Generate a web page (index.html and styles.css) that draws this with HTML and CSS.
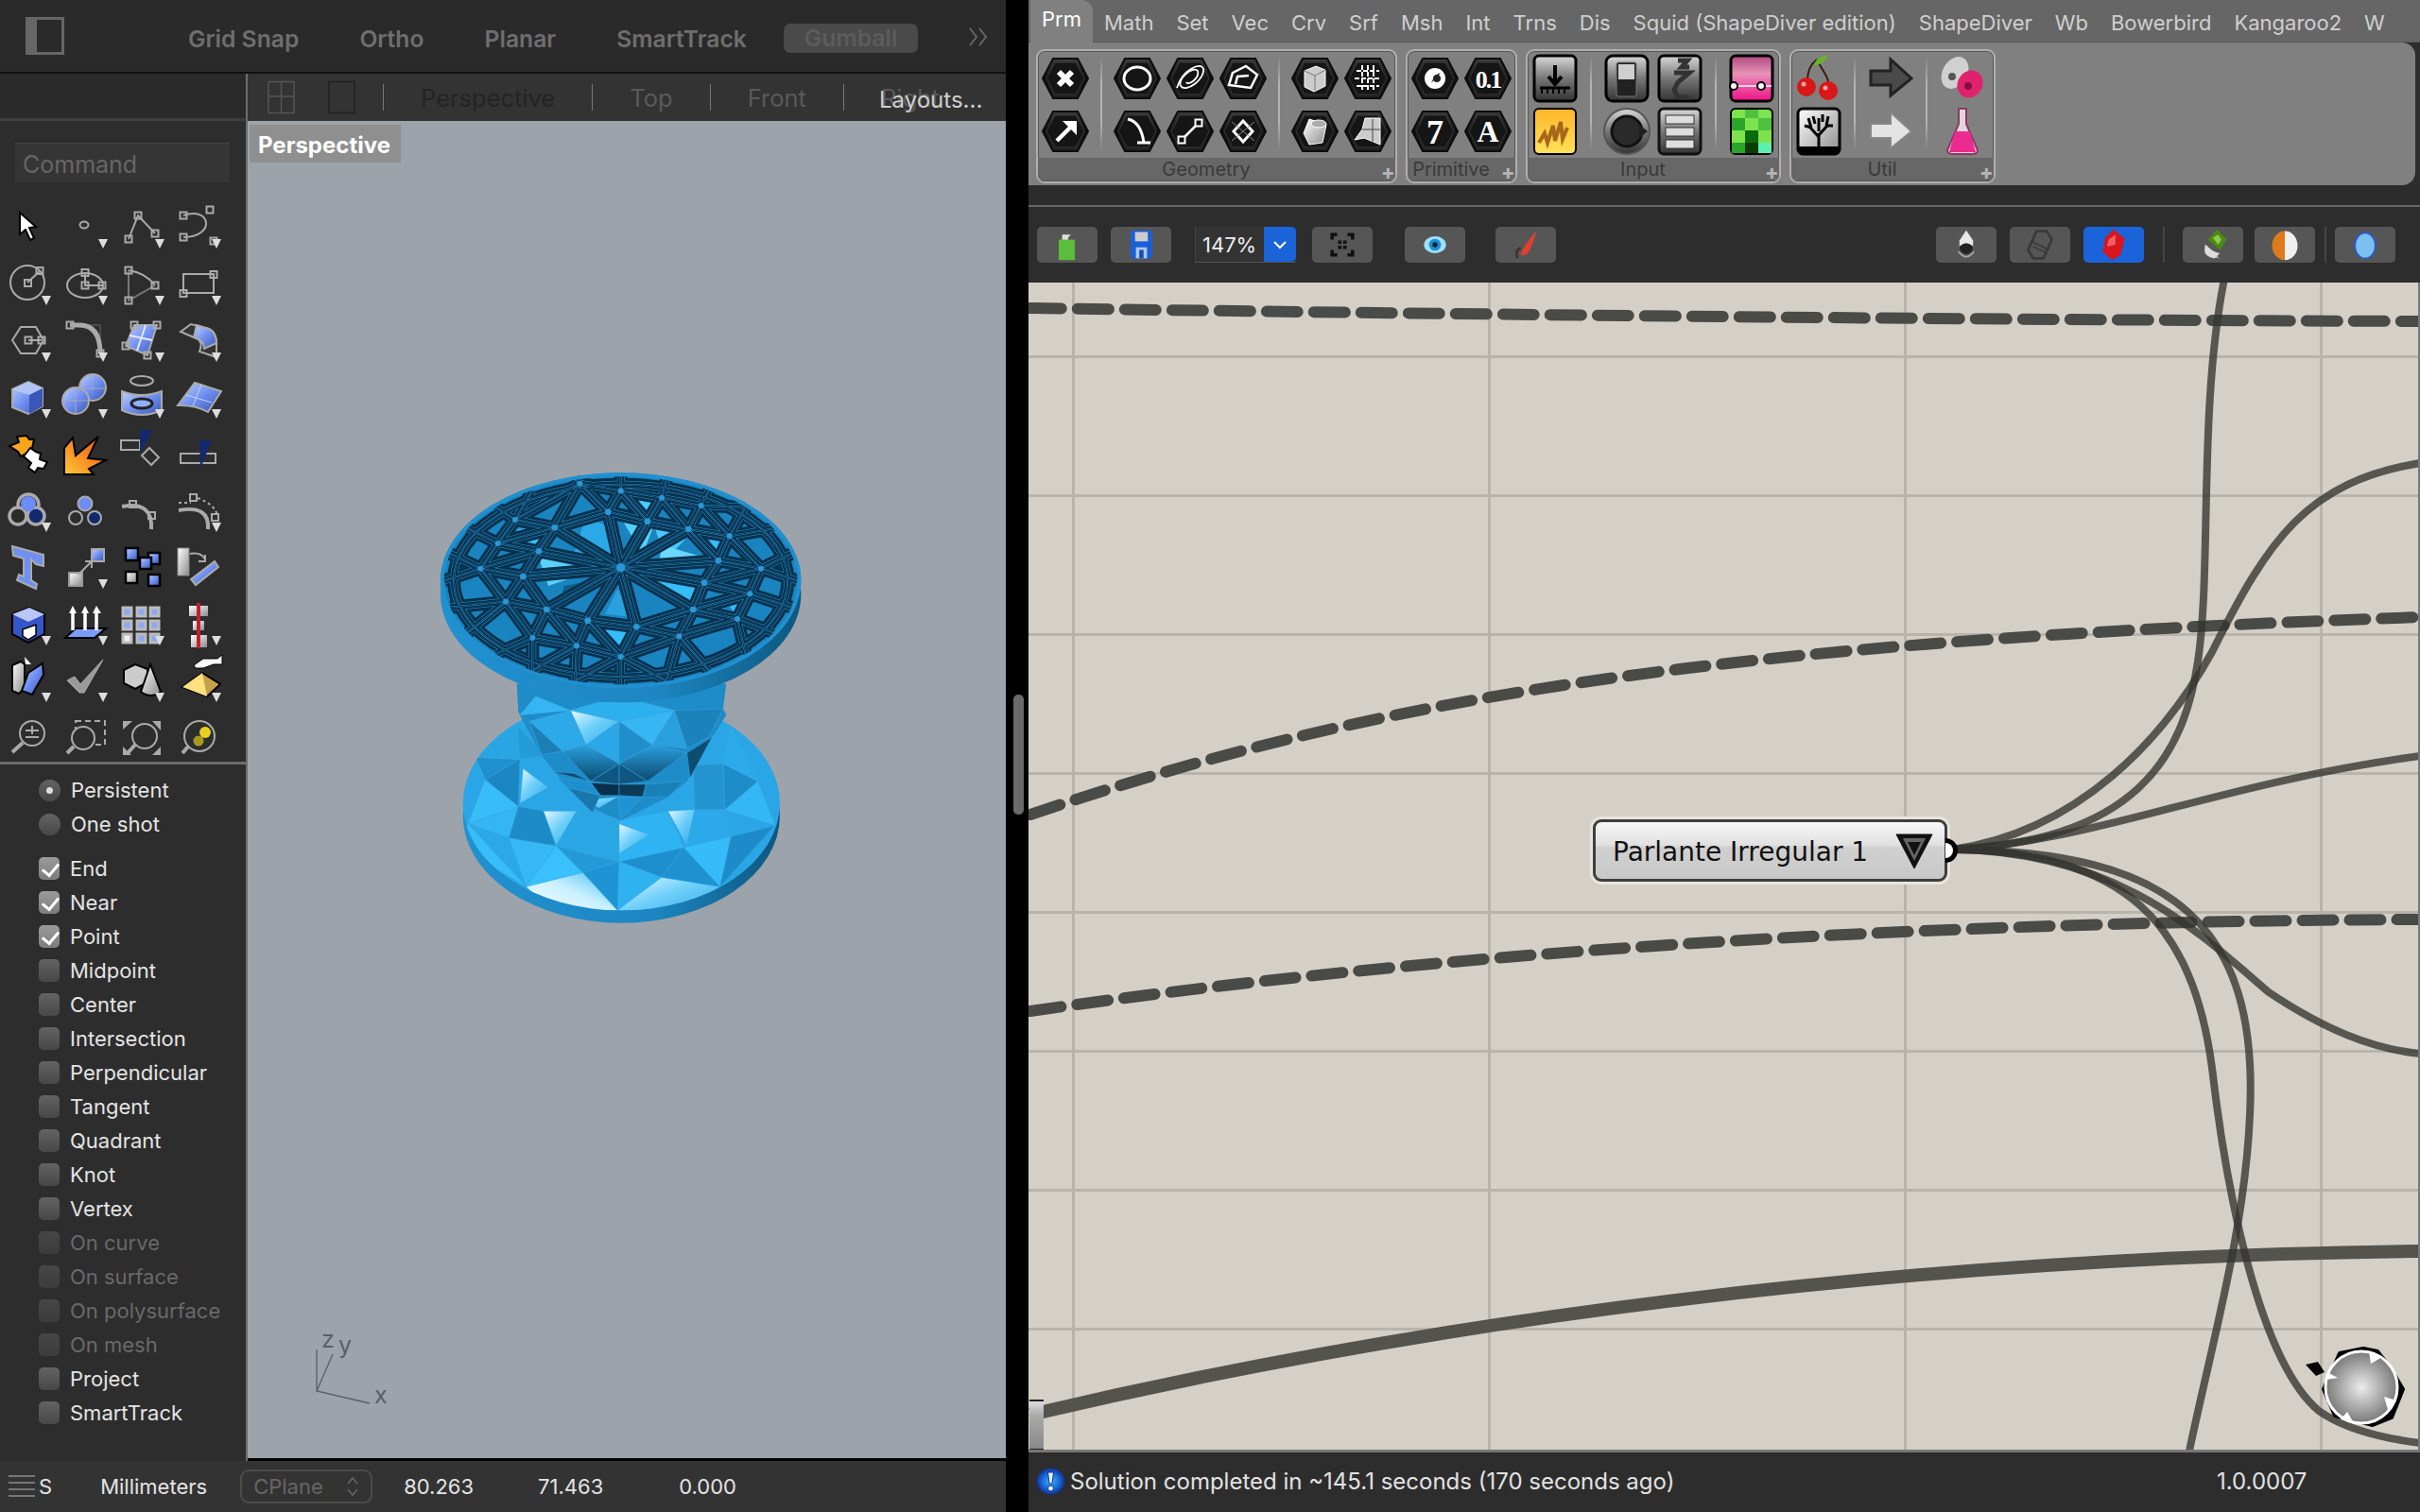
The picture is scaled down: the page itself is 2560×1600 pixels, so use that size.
FILE: index.html
```html
<!DOCTYPE html>
<html lang="en">
<head>
<meta charset="utf-8">
<title>Rhino and Grasshopper</title>
<link rel="stylesheet" href="styles.css">
</head>
<body>
<svg class="defs" aria-hidden="true">
  <defs>
    <linearGradient id="bl" x1="0" y1="0" x2="1" y2="1"><stop offset="0" stop-color="#c4d0fa"/><stop offset=".5" stop-color="#6f90f2"/><stop offset="1" stop-color="#3a55b0"/></linearGradient>
    <linearGradient id="gr" x1="0" y1="0" x2="1" y2="1"><stop offset="0" stop-color="#fff"/><stop offset="1" stop-color="#8c8c8c"/></linearGradient>
    <linearGradient id="org" x1="0" y1="1" x2="1" y2="0"><stop offset="0" stop-color="#ffc838"/><stop offset="1" stop-color="#f04a10"/></linearGradient>
    <linearGradient id="hexg" x1="0" y1="0" x2="0" y2="1"><stop offset="0" stop-color="#3c3c3c"/><stop offset=".5" stop-color="#111"/><stop offset="1" stop-color="#222"/></linearGradient>
    <linearGradient id="sq" x1="0" y1="0" x2="0" y2="1"><stop offset="0" stop-color="#d8d8d8"/><stop offset=".5" stop-color="#777"/><stop offset="1" stop-color="#333"/></linearGradient>
    <linearGradient id="pk" x1="0" y1="0" x2="0" y2="1"><stop offset="0" stop-color="#b04a80"/><stop offset=".4" stop-color="#e892b8"/><stop offset="1" stop-color="#ee1088"/></linearGradient>
    <linearGradient id="yl" x1="0" y1="0" x2="0" y2="1"><stop offset="0" stop-color="#fdb62a"/><stop offset="1" stop-color="#ffe25a"/></linearGradient>
    <linearGradient id="whb" x1="0" y1="1" x2="1" y2="0"><stop offset="0" stop-color="#fff"/><stop offset=".55" stop-color="#c8f0ff"/><stop offset="1" stop-color="#3ab8f5"/></linearGradient>
    <linearGradient id="whc" x1="0" y1="0" x2="1" y2="1"><stop offset="0" stop-color="#e8f9ff"/><stop offset=".45" stop-color="#70d0fa"/><stop offset="1" stop-color="#2aa8ea"/></linearGradient>
    <linearGradient id="rim" x1="0" y1="0" x2="1" y2="0"><stop offset="0" stop-color="#2191d0"/><stop offset=".6" stop-color="#1d86c2"/><stop offset="1" stop-color="#0d577f"/></linearGradient>
    <linearGradient id="arcd" x1="0" y1="0" x2="0" y2="1"><stop offset="0" stop-color="#2a9fde"/><stop offset="1" stop-color="#0c4a6e"/></linearGradient>
    <radialGradient id="giz"><stop offset="0" stop-color="#ececec"/><stop offset="1" stop-color="#7a7a7a"/></radialGradient>
    <radialGradient id="inf"><stop offset="0" stop-color="#3cb8f0"/><stop offset=".6" stop-color="#1a6ad8"/><stop offset="1" stop-color="#12308c"/></radialGradient>
    <g id="tri"><path d="M44 43h10l-5 10z" fill="#ddd"/></g>
    <g id="hex"><path d="M4 28 15 7h26l11 21-11 21H15z" fill="url(#hexg)" stroke="#0c0c0c" stroke-width="2"/><path d="M8 28 17 11h22l9 17-9 17H17z" fill="#151515" stroke="#3a3a3a" stroke-width="1"/></g>
  </defs>
</svg>

<div class="app">
  <section class="rhino">
    <header class="topbar">
      <svg class="panel-icon" viewBox="0 0 41 40"><rect x="1.500" y="1.500" width="38" height="37" fill="none" stroke="#666" stroke-width="3"/><rect x="3" y="3" width="9" height="34" fill="#666"/></svg>
      <nav class="toggles">
        <span>Grid Snap</span><span>Ortho</span><span>Planar</span><span>SmartTrack</span><span class="pill">Gumball</span>
      </nav>
      <svg class="more" viewBox="0 0 22 24"><path d="M2 3l7 9-7 9M12 3l7 9-7 9" fill="none" stroke="#666" stroke-width="2"/></svg>
    </header>
    <div class="rhino-mid">
      <aside class="side">
        <div class="side-head"></div>
        <div class="cmd">Command</div>
        <div class="tools">
          <svg viewBox="0 0 60 60"><path d="M21 15V38L27 33 32 44l4-2-5-11 7-1z" fill="#fff" stroke="#000" stroke-width="2"/></svg>
          <svg viewBox="0 0 60 60" class="tl"><ellipse cx="29" cy="28" rx="4.500" ry="3.500"/><use href="#tri"/></svg>
          <svg viewBox="0 0 60 60" class="tl"><path d="M16 43 26 18 44 37"/><rect x="12.500" y="39.500" width="7" height="7"/><rect x="22.500" y="14.500" width="7" height="7"/><rect x="40.500" y="33.500" width="7" height="7"/><use href="#tri"/></svg>
          <svg viewBox="0 0 60 60" class="tl"><path d="M14 18C44 8 48 41 14 41"/><rect x="10.500" y="14.500" width="7" height="7"/><rect x="38.500" y="8.500" width="7" height="7"/><rect x="10.500" y="37.500" width="7" height="7"/><rect x="42.500" y="41.500" width="7" height="7"/><use href="#tri"/></svg>

          <svg viewBox="0 0 60 60" class="tl"><circle cx="29" cy="29" r="18"/><path d="M29 29 42 17"/><rect x="26" y="26" width="7" height="7"/><rect x="38.500" y="13" width="7" height="7"/><use href="#tri"/></svg>
          <svg viewBox="0 0 60 60" class="tl"><ellipse cx="30" cy="32" rx="19" ry="13"/><path d="M30 19V32H48"/><rect x="26.500" y="15" width="7" height="7"/><rect x="26.500" y="28.500" width="7" height="7"/><rect x="44.500" y="28.500" width="7" height="7"/><use href="#tri"/></svg>
          <svg viewBox="0 0 60 60" class="tl"><path d="M16 16C30 18 38 24 44 32" /><path d="M16 16V48L44 32" stroke="#777"/><rect x="12.500" y="12.500" width="7" height="7"/><rect x="40.500" y="28.500" width="7" height="7"/><rect x="12.500" y="44.500" width="7" height="7"/><use href="#tri"/></svg>
          <svg viewBox="0 0 60 60" class="tl"><rect x="14" y="20" width="32" height="20"/><rect x="10.500" y="37" width="7" height="7"/><rect x="42.500" y="17" width="7" height="7"/><use href="#tri"/></svg>

          <svg viewBox="0 0 60 60" class="tl"><path d="M13 30 22 16H38L46 30 38 44H22Z"/><path d="M30 30H44"/><rect x="26.500" y="26.500" width="7" height="7"/><rect x="40.500" y="26.500" width="7" height="7"/><use href="#tri"/></svg>
          <svg viewBox="0 0 60 60" class="tl"><path d="M14 14H46V44" stroke="#666" stroke-width="1"/><path d="M14 14H24Q46 14 46 44" stroke-width="5"/><rect x="10.500" y="10.500" width="7" height="7"/><rect x="42.500" y="40.500" width="7" height="7"/><use href="#tri"/></svg>
          <svg viewBox="0 0 60 60" class="tl"><path d="M22 14 46 14 36 46 13 36Z" fill="url(#bl)"/><path d="M34 14 25 41M17 25 41 30" stroke="#e0e8ff"/><rect x="18.500" y="10.500" width="7" height="7"/><rect x="42.500" y="10.500" width="7" height="7"/><rect x="9.500" y="32.500" width="7" height="7"/><rect x="32.500" y="42.500" width="7" height="7"/><use href="#tri"/></svg>
          <svg viewBox="0 0 60 60" class="tl"><path d="M11 21 22 13 41 18Q50 22 49 38V48L31 42Q36 30 25 27Z" fill="#333"/><path d="M25 27Q36 30 36 39L49 33Q49 22 41 18L28 14Z" fill="url(#bl)"/><use href="#tri"/></svg>

          <svg viewBox="0 0 60 60"><path d="M13 22 30 14 45 21V40L30 48 13 41Z" fill="url(#bl)" stroke="#aaa" stroke-width="2"/><path d="M13 22 31 28 45 21 30 14Z" fill="#b4c4f8"/><path d="M31 28 45 21V40L31 48Z" fill="#3a56b8"/><use href="#tri"/></svg>
          <svg viewBox="0 0 60 60"><circle cx="38" cy="20" r="14" fill="url(#bl)" stroke="#aaa" stroke-width="2"/><circle cx="20" cy="34" r="14" fill="url(#bl)" stroke="#aaa" stroke-width="2"/><path d="M8 34H33M20 20V48M25 21H52M38 7V24" stroke="#a8a8b8" fill="none"/><use href="#tri"/></svg>
          <svg viewBox="0 0 60 60"><ellipse cx="30" cy="13" rx="12" ry="5" fill="none" stroke="#aaa" stroke-width="2"/><path d="M9 24Q30 32 51 24V44Q30 54 9 44Z" fill="url(#bl)" stroke="#aaa" stroke-width="2"/><ellipse cx="30" cy="37" rx="11" ry="5" fill="#8fb0ff" stroke="#222" stroke-width="3"/><use href="#tri"/></svg>
          <svg viewBox="0 0 60 60"><path d="M8 39 26 15 54 24 40 46Q26 38 8 39Z" fill="url(#bl)" stroke="#aaa" stroke-width="2"/><path d="M17 28 44 36M33 17 24 40" stroke="#c8d6ff" fill="none"/><use href="#tri"/></svg>

          <svg viewBox="0 0 60 60"><path d="M10 22 20 18 18 12 28 11 31 15 36 15 34 24 28 30 22 33 19 28Z" fill="#f8a51a" stroke="#000" stroke-width="2"/><path d="M25 33 32 24 38 28 43 30 42 36 50 39 46 46 40 45 37 50 30 45 33 40Z" fill="#fff" stroke="#000" stroke-width="2"/></svg>
          <svg viewBox="0 0 60 60"><path d="M8 52V24L17 13 20 32 44 12 33 35 52 37 34 46 39 52Z" fill="url(#org)" stroke="#000" stroke-width="2"/></svg>
          <svg viewBox="0 0 60 60"><path d="M8 16H28V26H8Z M30 32 38 24 48 34 40 42Z" fill="none" stroke="#aaa" stroke-width="2"/><path d="M28 5H42L28 29Z" fill="#13296f"/></svg>
          <svg viewBox="0 0 60 60"><path d="M11 30H48V40H11Z" fill="none" stroke="#aaa" stroke-width="2"/><path d="M31 16H44L32 46Z" fill="#13296f"/></svg>

          <svg viewBox="0 0 60 60"><circle cx="30" cy="24" r="11" fill="none" stroke="#aaa" stroke-width="3.500"/><circle cx="19" cy="36" r="9" fill="#2b2b2b" stroke="#aaa" stroke-width="3.500"/><circle cx="38" cy="36" r="9" fill="#13296f" stroke="#aaa" stroke-width="3.500"/><circle cx="30" cy="23" r="8" fill="#6c8cf6"/><use href="#tri"/></svg>
          <svg viewBox="0 0 60 60"><circle cx="30" cy="23" r="7.500" fill="#6c8cf6" stroke="#aaa" stroke-width="2"/><circle cx="20" cy="38" r="7" fill="none" stroke="#aaa" stroke-width="2"/><circle cx="40" cy="38" r="7" fill="#13296f" stroke="#aaa" stroke-width="2"/></svg>
          <svg viewBox="0 0 60 60" class="tl"><path d="M9 26Q42 20 40 50" stroke-width="4"/><rect x="17" y="20" width="7" height="7"/><rect x="37" y="32" width="7" height="7"/></svg>
          <svg viewBox="0 0 60 60" class="tl"><path d="M9 22H22M29 17Q48 24 50 36" stroke-dasharray="3 3"/><path d="M9 30Q42 24 40 50" stroke-width="4"/><rect x="21" y="13" width="7" height="7"/><rect x="44" y="34" width="7" height="7"/><use href="#tri"/></svg>

          <svg viewBox="0 0 60 60"><path d="M13 8 46 17V29L38 27 33 22 33 44 39 48 38 53 18 44 20 38 25 40V21L14 18Z" fill="#6f90f2" stroke="#aaa" stroke-width="2"/></svg>
          <svg viewBox="0 0 60 60"><rect x="13" y="36" width="14" height="14" fill="url(#gr)" stroke="#999" stroke-width="2"/><rect x="37" y="11" width="13" height="13" fill="url(#bl)" stroke="#aaa" stroke-width="2"/><path d="M23 38 37 24M30 24H37V31" stroke="#aaa" stroke-width="2" fill="none"/><use href="#tri"/></svg>
          <svg viewBox="0 0 60 60"><rect x="13" y="10" width="13" height="13" fill="url(#bl)" stroke="#000" stroke-width="2.500"/><rect x="37" y="15" width="12" height="12" fill="url(#bl)" stroke="#000" stroke-width="2.500"/><rect x="28" y="20" width="12" height="12" fill="url(#bl)" stroke="#000" stroke-width="2.500"/><rect x="13" y="35" width="12" height="12" fill="url(#gr)" stroke="#000" stroke-width="2.500"/><rect x="37" y="38" width="12" height="12" fill="url(#bl)" stroke="#000" stroke-width="2.500"/></svg>
          <svg viewBox="0 0 60 60"><rect x="8" y="10" width="12" height="29" fill="url(#gr)" stroke="#888" stroke-width="1"/><path d="M21 16Q33 14 37 22" fill="none" stroke="#aaa" stroke-width="2"/><path d="M30 24 37 24 37 17" fill="none" stroke="#aaa" stroke-width="2"/><path d="M22 43 47 24 51 30 27 49Z" fill="url(#bl)" stroke="#aaa" stroke-width="2"/></svg>

          <svg viewBox="0 0 60 60"><path d="M13 20 31 13 47 20V41L30 50 13 41Z" fill="#3556c8" stroke="#000" stroke-width="2"/><path d="M13 20 31 13 47 20 30 28Z" fill="#b8c6fa"/><path d="M24 36 38 31V42L30 47 24 43Z" fill="#fff" stroke="#000" stroke-width="1.500"/><use href="#tri"/></svg>
          <svg viewBox="0 0 60 60"><path d="M9 45 20 35H52L40 45Z" fill="#7a9cf8" stroke="#000" stroke-width="2"/><path d="M17 37V18M30 37V18M42 37V18" stroke="#fff" stroke-width="3.500"/><path d="M13 19 17 11 21 19ZM26 19 30 11 34 19ZM38 19 42 11 47 19Z" fill="#fff"/><use href="#tri"/></svg>
          <svg viewBox="0 0 60 60" class="grid3"><rect x="10" y="13" width="9" height="9"/><rect x="25" y="13" width="9" height="9"/><rect x="39" y="13" width="9" height="9"/><rect x="10" y="27" width="9" height="9"/><rect x="25" y="27" width="9" height="9"/><rect x="39" y="27" width="9" height="9"/><rect class="w" x="10" y="41" width="9" height="9"/><rect x="25" y="41" width="9" height="9"/><rect x="39" y="41" width="9" height="9"/><use href="#tri"/></svg>
          <svg viewBox="0 0 60 60"><rect x="20" y="11" width="20" height="11" fill="url(#gr)"/><rect x="24" y="27" width="12" height="10" fill="url(#gr)"/><rect x="22" y="42" width="17" height="13" fill="url(#gr)"/><rect x="28" y="8" width="4" height="48" fill="#c02030"/><use href="#tri"/></svg>

          <svg viewBox="0 0 60 60"><path d="M13 14 22 10 26 13V38L20 44 13 41Z" fill="url(#gr)" stroke="#000" stroke-width="2"/><path d="M26 5 33 13 27 13Z" fill="#fff"/><path d="M30 22 45 12 46 24 34 45 23 41Z" fill="url(#bl)" stroke="#000" stroke-width="2"/><use href="#tri"/></svg>
          <svg viewBox="0 0 60 60"><path d="M11 30 19 26 25 34 49 8 29 43H24Z" fill="#9a9a9a" stroke="#aaa"/><use href="#tri"/></svg>
          <svg viewBox="0 0 60 60"><path d="M11 19 23 13 36 18V32L23 39 11 33Z" fill="#ccc" stroke="#000" stroke-width="2"/><path d="M29 42 39 13 50 42Q40 50 29 42Z" fill="url(#gr)" stroke="#000" stroke-width="2"/><use href="#tri"/></svg>
          <svg viewBox="0 0 60 60"><path d="M34 22 53 34 39 47 13 37Z" fill="#c4a04a" stroke="#000" stroke-width="2"/><path d="M34 22 13 37 39 47Z" fill="#fde080"/><path d="M25 14 35 7H50L55 3V13H46L35 17H27Z" fill="#fff" stroke="#000"/><use href="#tri"/></svg>

          <svg viewBox="0 0 60 60" class="tl mag"><circle cx="34" cy="21" r="13"/><path d="M24 31 13 41" stroke-width="4"/><path d="M27 25H41M34 13V22M27 18H41" stroke-width="2"/></svg>
          <svg viewBox="0 0 60 60" class="tl mag"><rect x="20" y="8" width="31" height="25" stroke-dasharray="6 4"/><circle cx="28" cy="26" r="12" fill="#2d2d2d"/><path d="M18 35 11 42" stroke-width="4"/></svg>
          <svg viewBox="0 0 60 60" class="tl mag"><circle cx="33" cy="24" r="13"/><path d="M23 33 15 42" stroke-width="4"/><path d="M10 8H20L10 17ZM50 8V18L41 8ZM10 35V44H19ZM50 35V44H41Z" fill="#aaa" stroke="none"/></svg>
          <svg viewBox="0 0 60 60" class="tl mag"><circle cx="31" cy="24" r="16"/><circle cx="37" cy="20" r="6" fill="#e8d020" stroke="none"/><circle cx="30" cy="29" r="5.500" fill="#a89820" stroke="none"/><path d="M19 35 13 42" stroke-width="4"/></svg>
        </div>
        <div class="opts">
          <label class="opt radio on"><i></i>Persistent</label>
          <label class="opt radio gapb"><i></i>One shot</label>
          <label class="opt chk on"><i></i>End</label>
          <label class="opt chk on"><i></i>Near</label>
          <label class="opt chk on"><i></i>Point</label>
          <label class="opt chk"><i></i>Midpoint</label>
          <label class="opt chk"><i></i>Center</label>
          <label class="opt chk"><i></i>Intersection</label>
          <label class="opt chk"><i></i>Perpendicular</label>
          <label class="opt chk"><i></i>Tangent</label>
          <label class="opt chk"><i></i>Quadrant</label>
          <label class="opt chk"><i></i>Knot</label>
          <label class="opt chk"><i></i>Vertex</label>
          <label class="opt chk off"><i></i>On curve</label>
          <label class="opt chk off"><i></i>On surface</label>
          <label class="opt chk off"><i></i>On polysurface</label>
          <label class="opt chk off"><i></i>On mesh</label>
          <label class="opt chk"><i></i>Project</label>
          <label class="opt chk"><i></i>SmartTrack</label>
        </div>
      </aside>
      <div class="vp-col">
        <div class="vp-tabs">
          <svg class="vp-ico" viewBox="0 0 30 36"><path d="M1 1H29V35H1ZM1 17H29M15 1V35" fill="#333" stroke="#555" stroke-width="1.500"/></svg>
          <svg class="vp-ico second" viewBox="0 0 30 36"><path d="M1 1H29V35H1Z" fill="#333" stroke="#222" stroke-width="1.500"/></svg>
          <b class="vsep"></b><span class="vt cur">Perspective</span>
          <b class="vsep"></b><span class="vt">Top</span>
          <b class="vsep"></b><span class="vt">Front</span>
          <b class="vsep"></b><span class="vt">Right</span>
          <span class="layouts">Layouts...</span>
        </div>
        <div class="viewport">
          <div class="vp-label">Perspective</div>
          <svg class="model" viewBox="0 0 1320 1560">
            <defs>
              <clipPath id="lowface"><ellipse cx="652" cy="1110" rx="503" ry="340"/></clipPath>
              <clipPath id="topface"><ellipse cx="650" cy="403" rx="572" ry="342"/></clipPath>
              <g id="rib" fill="none">
                <path d="M650 362 610 185M650 362 735 215M650 362 865 240M650 362 960 340M650 362 915 410M650 362 880 495M650 362 700 550M650 362 545 530M650 362 415 495M650 362 340 390M650 362 390 310M650 362 440 235M610 185 735 215 865 240 960 340 915 410 880 495 700 550 545 530 415 495 340 390 390 310 440 235 610 185M610 185 520 95M610 185 650 118M735 215 650 118M735 215 780 140M865 240 780 140M865 240 905 165M865 240 995 262M960 340 995 262M960 340 1095 365M915 410 1095 365M915 410 1060 445M880 495 1060 445M880 495 1020 525M880 495 835 580M700 550 835 580M700 550 650 645M545 530 650 645M545 530 510 610M415 495 510 610M415 495 370 585M415 495 285 470M340 390 285 470M340 390 205 365M390 310 205 365M390 310 260 285M440 235 260 285M440 235 315 210M440 235 520 95M520 95 650 118 780 140 905 165 995 262 1095 365 1060 445 1020 525 835 580 650 645 510 610 370 585 285 470 205 365 260 285 315 210 520 95"/>
                <path d="M1095 365 1210 403M1095 365 1191 318M1060 445 1191 488M1020 525 1135 568M1020 525 1046 636M835 580 930 689M835 580 795 722M650 645 650 733M650 645 795 722M650 645 505 722M510 610 505 722M510 610 370 689M370 585 370 689M370 585 254 636M285 470 165 568M285 470 109 488M205 365 90 403M205 365 109 318M260 285 165 238M315 210 254 170M315 210 370 117M520 95 505 84M650 118 650 73M780 140 795 84M905 165 930 117M905 165 1046 170M995 262 1135 238M995 262 1046 170"/>
                <ellipse cx="650" cy="403" rx="530" ry="305"/>
              </g>
            </defs>
            <!-- lower disc -->
            <ellipse cx="652" cy="1150" rx="503" ry="340" fill="url(#rim)"/>
            <ellipse cx="652" cy="1110" rx="503" ry="340" fill="#2aa6e6"/>
            <g clip-path="url(#lowface)" class="fc">
              <path d="M165 1175 295 1220 325 1120Z" fill="#33b6f3"/>
              <path d="M165 1175 220 1035 325 1120Z" fill="#38bdf8"/>
              <path d="M190 965 330 970 220 1035Z" fill="#1f90ce"/>
              <path d="M220 1035 330 970 325 1120Z" fill="#1a86c2"/>
              <path d="M190 965 320 860 330 970Z" fill="#2aa5e4"/>
              <path d="M320 860 410 960 330 970Z" fill="#259bd9"/>
              <path d="M165 1175 350 1375 295 1220Z" fill="#2ba8e8"/>
              <path d="M140 1250 165 1175 350 1375Z" fill="#38bdf8"/>
              <path d="M295 1220 445 1245 350 1375Z" fill="#36b8f5"/>
              <path d="M445 1245 530 1330 350 1375Z" fill="#3ac0fa"/>
              <path d="M445 1245 645 1295 530 1330Z" fill="#2399d8"/>
              <path d="M350 1375 530 1330 640 1450 450 1470Z" fill="url(#whb)"/>
              <path d="M530 1330 645 1295 640 1450Z" fill="#1f94d4"/>
              <path d="M645 1295 780 1345 640 1450Z" fill="#2fb2f0"/>
              <path d="M640 1450 780 1345 965 1375 800 1470Z" fill="url(#whc)"/>
              <path d="M645 1295 850 1250 780 1345Z" fill="#1e8fce"/>
              <path d="M850 1250 965 1375 780 1345Z" fill="#1f90d0"/>
              <path d="M850 1250 1000 1215 965 1375Z" fill="#35bbf8"/>
              <path d="M1000 1215 1140 1180 965 1375Z" fill="#1d8bc9"/>
              <path d="M295 1220 325 1120 405 1135 445 1245Z" fill="#1c8bc8"/>
              <path d="M405 1135 510 1135 445 1245Z" fill="url(#whc)"/>
              <path d="M445 1245 510 1135 645 1165 645 1295Z" fill="#2aa6e5"/>
              <path d="M645 1165 800 1135 850 1250 645 1295Z" fill="#2fb4f3"/>
              <path d="M645 1175 740 1210 645 1270Z" fill="url(#whc)"/>
              <path d="M800 1135 885 1130 860 1245Z" fill="url(#whc)"/>
              <path d="M885 1130 980 1130 1000 1215 860 1245Z" fill="#2ca9ea"/>
              <path d="M980 1130 1140 1180 1000 1215Z" fill="#2ba5e6"/>
              <path d="M980 1130 1085 1040 1140 1180Z" fill="#34b8f5"/>
              <path d="M975 985 1085 1040 980 1130Z" fill="#1e8cc8"/>
              <path d="M975 985 1000 860 1085 1040Z" fill="#2cabeb"/>
              <path d="M880 990 975 985 980 1130 885 1130Z" fill="#2494d0"/>
              <path d="M340 1000 420 1060 330 1110Z" fill="url(#whc)"/>
            </g>
            <!-- waist -->
            <path d="M320 730H985L975 810 985 830 940 900 900 960 860 1040 800 1090 720 1130 650 1165 570 1130 480 1060 400 960 340 850 325 820Z" fill="#1e8cc8"/>
            <g class="fc">
              <path d="M380 770 490 815 330 830Z" fill="#33b6f3"/>
              <path d="M490 815 645 770 820 815 645 850Z" fill="#2db0ee"/>
              <path d="M490 815 645 850 540 925Z" fill="url(#whc)"/>
              <path d="M645 850 540 925 645 985Z" fill="#2ba6e6"/>
              <path d="M645 850 750 925 645 985Z" fill="#1f8ecb"/>
              <path d="M645 850 820 815 750 925Z" fill="#36b6f2"/>
              <path d="M490 815 360 850 465 945 540 925Z" fill="#2ea9e8"/>
              <path d="M820 815 975 810 930 900 860 935Z" fill="#1c82bb"/>
              <path d="M820 815 750 925 860 935Z" fill="#2a9fde"/>
              <path d="M465 945 540 925 645 985 555 1040Z" fill="url(#arcd)"/>
              <path d="M645 985 750 925 860 950 735 1040Z" fill="url(#arcd)"/>
              <path d="M860 950 940 900 870 1030Z" fill="#0d4d72"/>
              <path d="M360 850 465 945 400 955Z" fill="#1b7eb5"/>
              <path d="M645 985 555 1040 645 1050Z" fill="#0f5680"/>
              <path d="M645 985 735 1040 645 1050Z" fill="#0f5680"/>
              <path d="M430 1010 555 1040 500 1015Z" fill="#0c4a6e"/>
              <path d="M555 1045 645 1050 645 1085 585 1085Z" fill="#08304a"/>
              <path d="M645 1050 730 1050 720 1090 645 1085Z" fill="#0a3a57"/>
              <path d="M450 1030 555 1045 585 1085 480 1060Z" fill="#1e8fce"/>
              <path d="M730 1050 850 1040 800 1090 720 1090Z" fill="#1a80b8"/>
              <path d="M540 1100 640 1090 580 1125Z" fill="url(#whc)"/>
              <path d="M640 1090 720 1090 650 1160Z" fill="#1f94d4"/>
              <path d="M480 1060 585 1085 560 1140Z" fill="#1877ab"/>
            </g>
            <!-- top disc -->
            <ellipse cx="650" cy="448" rx="572" ry="342" fill="url(#rim)"/>
            <ellipse cx="650" cy="403" rx="572" ry="342" fill="#1a84c0"/>
            <g clip-path="url(#topface)">
              <path d="M540 200 650 250 640 340 500 320Z" fill="#2ba8e8"/>
              <path d="M660 220 760 215 720 320Z" fill="#55d0fc"/>
              <path d="M760 240 880 245 790 340Z" fill="#45c8fb"/>
              <path d="M780 290 950 340 770 360Z" fill="#6cd8fd"/>
              <path d="M390 330 620 350 420 420Z" fill="#5ad0fc"/>
              <path d="M470 420 630 390 450 500Z" fill="#0e5e8c"/>
              <path d="M640 430 700 520 600 510Z" fill="#2aa0de"/>
              <path d="M700 380 920 400 860 490Z" fill="#35bdf8"/>
              <path d="M540 130 720 150 620 190Z" fill="#1a84c0"/>
              <path d="M680 100 790 140 730 190Z" fill="#4ccafb"/>
              <path d="M320 240 430 230 380 310Z" fill="#35bdf8"/>
              <path d="M950 420 1080 420 1020 520Z" fill="#35bdf8"/>
              <path d="M590 560 700 560 645 640Z" fill="#35bdf8"/>
              <path d="M930 270 1010 260 960 340Z" fill="#35bdf8"/>
              <use href="#rib" stroke="#08324e" stroke-width="42"/>
              <use href="#rib" stroke="#2a97d6" stroke-width="23"/>
              <use href="#rib" stroke="#08324e" stroke-width="20"/>
              <use href="#rib" stroke="#2a97d6" stroke-width="5.500"/>
              <use href="#rib" stroke="#08324e" stroke-width="3"/>
              <g fill="#2a97d6"><circle cx="650" cy="362" r="14"/><circle cx="610" cy="185" r="10"/><circle cx="735" cy="215" r="10"/><circle cx="865" cy="240" r="10"/><circle cx="960" cy="340" r="10"/><circle cx="915" cy="410" r="10"/><circle cx="880" cy="495" r="10"/><circle cx="700" cy="550" r="10"/><circle cx="545" cy="530" r="10"/><circle cx="415" cy="495" r="10"/><circle cx="340" cy="390" r="10"/><circle cx="390" cy="310" r="10"/><circle cx="440" cy="235" r="10"/><circle cx="520" cy="95" r="9"/><circle cx="650" cy="118" r="9"/><circle cx="780" cy="140" r="9"/><circle cx="905" cy="165" r="9"/><circle cx="995" cy="262" r="9"/><circle cx="1095" cy="365" r="9"/><circle cx="1060" cy="445" r="9"/><circle cx="1020" cy="525" r="9"/><circle cx="835" cy="580" r="9"/><circle cx="650" cy="645" r="9"/><circle cx="510" cy="610" r="9"/><circle cx="370" cy="585" r="9"/><circle cx="285" cy="470" r="9"/><circle cx="205" cy="365" r="9"/><circle cx="260" cy="285" r="9"/><circle cx="315" cy="210" r="9"/></g>
              <ellipse cx="650" cy="403" rx="568" ry="338" fill="none" stroke="#2190d0" stroke-width="14"/>
            </g>
          </svg>
          <svg class="axes" viewBox="0 0 100 80"><path d="M13 10V54L69 67M13 54 30 15" fill="none" stroke="#5a5f66" stroke-width="1.300"/></svg>
          <span class="ax ax-z">z</span><span class="ax ax-y">y</span><span class="ax ax-x">x</span>
        </div>
      </div>
    </div>
    <footer class="r-status">
      <svg class="burger" viewBox="0 0 28 26"><path d="M0 2H28M0 9H28M0 16H28M0 23H28" stroke="#777" stroke-width="2"/></svg>
      <span class="s-s">S</span>
      <span class="s-unit">Millimeters</span>
      <span class="s-plane">CPlane<svg viewBox="0 0 14 22"><path d="M2 8 7 2l5 6M2 14l5 6 5-6" fill="none" stroke="#666" stroke-width="1.500"/></svg></span>
      <span class="s-x">80.263</span><span class="s-y">71.463</span><span class="s-z">0.000</span>
    </footer>
  </section>

  <div class="split"><i></i></div>

  <section class="gh">
    <nav class="gh-tabs">
      <span class="gt cur">Prm</span><span class="gt">Math</span><span class="gt">Set</span><span class="gt">Vec</span><span class="gt">Crv</span><span class="gt">Srf</span><span class="gt">Msh</span><span class="gt">Int</span><span class="gt">Trns</span><span class="gt">Dis</span><span class="gt">Squid (ShapeDiver edition)</span><span class="gt">ShapeDiver</span><span class="gt">Wb</span><span class="gt">Bowerbird</span><span class="gt">Kangaroo2</span><span class="gt">W</span>
    </nav>
    <div class="ribbon">
      <div class="grp">
        <div class="cells">
          <div class="col">
            <svg viewBox="0 0 56 56"><use href="#hex"/><path d="M21 21 35 35M35 21 21 35" class="gw" stroke-width="6"/></svg>
            <svg viewBox="0 0 56 56"><use href="#hex"/><path d="M19 38 35 22" class="gw" stroke-width="4.500"/><path d="M25 17H40V32Z" fill="#fff"/></svg>
          </div>
          <b class="csep"></b>
          <div class="col">
            <svg viewBox="0 0 56 56"><use href="#hex"/><ellipse cx="28" cy="28" rx="14" ry="12" class="gw" stroke-width="3"/></svg>
            <svg viewBox="0 0 56 56"><use href="#hex"/><path d="M18 15Q32 18 35 40M28 40H42" class="gw" stroke-width="3"/></svg>
          </div>
          <div class="col">
            <svg viewBox="0 0 56 56"><use href="#hex"/><path d="M14 38C20 18 40 10 42 18 44 28 24 44 18 36 14 28 32 14 36 20 38 28 26 36 24 32" class="gw" stroke-width="1.800"/></svg>
            <svg viewBox="0 0 56 56"><use href="#hex"/><path d="M19 37 37 19" class="gw" stroke-width="2.500"/><rect x="15.500" y="33.500" width="7" height="7" fill="#111" stroke="#fff" stroke-width="2"/><rect x="33.500" y="15.500" width="7" height="7" fill="#111" stroke="#fff" stroke-width="2"/></svg>
          </div>
          <div class="col">
            <svg viewBox="0 0 56 56"><use href="#hex"/><path d="M17 22 31 15 43 24 36 38 13 35Z M20 34 22 26 34 25" class="gw" stroke-width="2.500"/></svg>
            <svg viewBox="0 0 56 56"><use href="#hex"/><path d="M28 17 38 28 28 39 18 28Z" class="gw" stroke-width="3"/><path d="M16 18 40 38M40 18 16 38" stroke="#888" stroke-width="1"/></svg>
          </div>
          <b class="csep"></b>
          <div class="col">
            <svg viewBox="0 0 56 56"><use href="#hex"/><path d="M17 20 29 15 39 19V36L27 42 17 37Z" fill="#ccc" stroke="#fff"/><path d="M17 20 28 25 39 19M28 25V41" stroke="#777" fill="none"/></svg>
            <svg viewBox="0 0 56 56"><use href="#hex"/><path d="M22 15 40 21 36 40 22 42 16 30Z" fill="url(#gr)" stroke="#fff"/><ellipse cx="32" cy="20" rx="8" ry="4" fill="#aaa" stroke="#fff"/></svg>
          </div>
          <div class="col">
            <svg viewBox="0 0 56 56"><use href="#hex"/><path d="M16 20H40M14 28H42M16 36H40M22 14V42M28 14V42M34 14V42" class="gw" stroke-width="2" stroke-dasharray="5 2"/></svg>
            <svg viewBox="0 0 56 56"><use href="#hex"/><path d="M25 14H41V42L24 35 14 37 22 26Z" fill="#ccc" stroke="#fff"/><path d="M33 15V40M22 26H41" stroke="#444"/></svg>
          </div>
        </div>
        <div class="gfoot"><span>Geometry</span><em>✚</em></div>
      </div>
      <div class="grp">
        <div class="cells">
          <div class="col">
            <svg viewBox="0 0 56 56"><use href="#hex"/><circle cx="28" cy="28" r="11" fill="#fff"/><path d="M24 33 34 22Q28 23 24 33Z" fill="#222"/><circle cx="30" cy="28" r="4" fill="#222"/></svg>
            <svg viewBox="0 0 56 56"><use href="#hex"/><text x="28" y="41" class="gsym big">7</text></svg>
          </div>
          <div class="col">
            <svg viewBox="0 0 56 56"><use href="#hex"/><text x="28" y="38" class="gsym mid">0.1</text></svg>
            <svg viewBox="0 0 56 56"><use href="#hex"/><text x="28" y="39" class="gsym big2">A</text></svg>
          </div>
        </div>
        <div class="gfoot"><span>Primitive</span><em>✚</em></div>
      </div>
      <div class="grp">
        <div class="cells">
          <div class="col">
            <svg viewBox="0 0 56 56"><rect x="6" y="4" width="44" height="48" rx="5" fill="url(#sq)" stroke="#000" stroke-width="3"/><path d="M28 14V32M21 26 28 34 35 26" stroke="#000" stroke-width="4" fill="none"/><path d="M12 38H44" stroke="#000" stroke-width="3"/><path d="M14 39V44M20 39V44M26 39V44M32 39V44M38 39V44" stroke="#000" stroke-width="2"/></svg>
            <svg viewBox="0 0 56 56"><rect x="6" y="4" width="44" height="48" rx="5" fill="url(#yl)" stroke="#000" stroke-width="2"/><path d="M11 40 17 30 20 40 26 22 28 38 34 18 36 36 41 24" fill="none" stroke="#a8661a" stroke-width="4"/></svg>
          </div>
          <b class="csep"></b>
          <div class="col">
            <svg viewBox="0 0 56 56"><rect x="6" y="4" width="44" height="48" rx="7" fill="url(#sq)" stroke="#000" stroke-width="3"/><rect x="17" y="11" width="21" height="36" rx="2" fill="#222" stroke="#777"/><rect x="19" y="13" width="17" height="16" fill="#cfcfcf"/></svg>
            <svg viewBox="0 0 56 56"><circle cx="28" cy="28" r="24" fill="url(#sq)" stroke="#555" stroke-width="2"/><circle cx="28" cy="28" r="16" fill="#2a2a2a" stroke="#111" stroke-width="3"/><path d="M40 20 50 28 40 36Z" fill="#222"/></svg>
          </div>
          <div class="col">
            <svg viewBox="0 0 56 56"><rect x="6" y="4" width="44" height="48" rx="5" fill="url(#sq)" stroke="#000" stroke-width="3"/><path d="M26 9H36L30 16H38M22 22H38L26 32 22 40 26 48H38" fill="none" stroke="#333" stroke-width="5"/></svg>
            <svg viewBox="0 0 56 56"><rect x="6" y="4" width="44" height="48" rx="5" fill="url(#sq)" stroke="#111" stroke-width="3"/><rect x="13" y="11" width="30" height="9" fill="#ddd" stroke="#333"/><rect x="13" y="24" width="30" height="9" fill="#ddd" stroke="#333"/><rect x="13" y="37" width="30" height="9" fill="#ddd" stroke="#333"/></svg>
          </div>
          <b class="csep"></b>
          <div class="col">
            <svg viewBox="0 0 56 56"><rect x="6" y="4" width="44" height="48" rx="5" fill="url(#pk)" stroke="#000" stroke-width="3"/><path d="M7 36H49" stroke="#fff" stroke-width="1.500"/><circle cx="9" cy="36" r="4" fill="#fff" stroke="#000" stroke-width="2"/><circle cx="38" cy="36" r="4" fill="#fff" stroke="#000" stroke-width="2"/></svg>
            <svg viewBox="0 0 56 56" class="check"><rect x="6" y="4" width="44" height="48" rx="5" fill="#7de24e" stroke="#000" stroke-width="2"/><path d="M7 14H21V27H7ZM21 27H35V40H21ZM7 40H21V51H7Z" fill="#2aa52a"/><path d="M21 5H35V14H21ZM35 14H49V27H35ZM35 40H49V51H35Z" fill="#50c040"/><path d="M21 27H35V40H21Z" fill="#0c6a0c"/><path d="M21 40H35V51H21Z" fill="#0e3c06"/><path d="M35 40H49V51H35Z" fill="#5af0b0"/></svg>
          </div>
        </div>
        <div class="gfoot"><span>Input</span><em>✚</em></div>
      </div>
      <div class="grp">
        <div class="cells">
          <div class="col">
            <svg viewBox="0 0 56 56"><path d="M26 8C18 14 16 22 16 30M26 8C32 20 38 26 38 32" fill="none" stroke="#3a1a14" stroke-width="2"/><path d="M22 15Q26 4 38 3 36 12 22 15Z" fill="#6ab02a"/><circle cx="15" cy="37" r="10" fill="#d81818"/><circle cx="38" cy="41" r="10" fill="#d81818"/><circle cx="12" cy="34" r="2.500" fill="#f6a0a0"/><circle cx="35" cy="38" r="2.500" fill="#f6a0a0"/></svg>
            <svg viewBox="0 0 56 56"><rect x="6" y="4" width="44" height="48" rx="5" fill="url(#gr)" stroke="#000" stroke-width="3"/><rect x="7" y="44" width="42" height="7" fill="#000"/><path d="M28 48V30M28 34 19 24M28 32 37 22M28 28V14M20 24 13 22M20 24 17 14M36 22 43 22M36 22 38 12M24 20 22 12M32 18 32 10" stroke="#000" stroke-width="3" fill="none"/></svg>
          </div>
          <b class="csep"></b>
          <div class="col">
            <svg viewBox="0 0 56 56"><path d="M7 20H28V8L50 28 28 46V35H7Z" fill="#4a4a4a" stroke="#222" stroke-width="3"/></svg>
            <svg viewBox="0 0 56 56"><path d="M7 20H28V8L50 28 28 46V35H7Z" fill="#e4e4e4" stroke="#888" stroke-width="2"/></svg>
          </div>
          <b class="csep"></b>
          <div class="col">
            <svg viewBox="0 0 56 56"><ellipse cx="20" cy="22" rx="13" ry="18" fill="#d0d0d0" transform="rotate(30 20 22)"/><circle cx="17" cy="26" r="4" fill="#555"/><ellipse cx="36" cy="34" rx="13" ry="15" fill="#e0226e" transform="rotate(30 36 34)"/><circle cx="34" cy="36" r="4" fill="#801040"/></svg>
            <svg viewBox="0 0 56 56"><path d="M24 4H32V20L44 48Q44 52 38 52H18Q12 52 12 48L24 20Z" fill="#e4d4dc" stroke="#8a3a60" stroke-width="2"/><path d="M20 28H36L42 50H14Z" fill="#ec2a90"/></svg>
          </div>
        </div>
        <div class="gfoot"><span>Util</span><em>✚</em></div>
      </div>
    </div>
    <div class="band"></div>
    <div class="gh-tools">
      <button class="tb"><svg viewBox="0 0 40 40"><path d="M14 8H24L21 12V34H14Z" fill="#ddd"/><rect x="10" y="14" width="19" height="24" fill="#5cbc3c"/></svg></button>
      <button class="tb"><svg viewBox="0 0 40 40"><rect x="8" y="3" width="25" height="33" rx="2" fill="#1a5fd8"/><rect x="13" y="5" width="15" height="11" fill="#ccc"/><rect x="14" y="23" width="13" height="13" fill="#aac8f8"/><rect x="18" y="26" width="5" height="10" fill="#1a4ab0"/></svg></button>
      <div class="zoomsel"><span>147%</span><i><svg viewBox="0 0 16 10"><path d="M2 2l6 6 6-6" fill="none" stroke="#fff" stroke-width="2"/></svg></i></div>
      <button class="tb wide1"><svg viewBox="0 0 40 40"><path d="M6 6H14V10H10V14H6ZM26 6H34V14H30V10H26ZM6 26H10V30H14V34H6ZM34 26V34H26V30H30V26Z" fill="#111"/><path d="M15 15h4v4h-4zM21 21h4v4h-4zM21 15h4v4h-4zM15 21h4v4h-4z" fill="#111"/></svg></button>
      <button class="tb wide2"><svg viewBox="0 0 40 40"><ellipse cx="20" cy="20" rx="13" ry="10" fill="#9fe0ff"/><circle cx="20" cy="20" r="7" fill="#1a8fd0"/><circle cx="20" cy="20" r="3" fill="#123"/></svg></button>
      <button class="tb"><svg viewBox="0 0 40 40"><path d="M33 4C28 10 17 20 14 32 18 34 24 30 26 24Z" fill="#e04030"/><path d="M14 24Q7 26 10 36" stroke="#432" stroke-width="3" fill="none"/></svg></button>
      <span class="grow"></span>
      <button class="tb"><svg viewBox="0 0 40 40"><path d="M20 3 28 15V24H12V15Z" fill="#e8e8e8"/><path d="M12 22Q20 14 28 22 28 30 20 31 12 30 12 22Z" fill="#222"/><path d="M11 28Q20 40 29 28" fill="none" stroke="#aaa" stroke-width="2"/></svg></button>
      <button class="tb"><svg viewBox="0 0 40 40"><path d="M16 4H28L34 14 24 36H12L6 26Z" fill="none" stroke="#3a3a3a" stroke-width="3"/><path d="M10 16 30 26M12 22 28 30" stroke="#3a3a3a" stroke-width="2"/></svg></button>
      <button class="tb blue"><svg viewBox="0 0 40 40"><path d="M20 2 33 13 28 32 18 38 7 28 10 12Z" fill="#d8161c"/><path d="M14 14 22 8 22 20 12 22Z" fill="#f06060"/></svg></button>
      <b class="tsep"></b>
      <button class="tb near"><svg viewBox="0 0 40 40"><path d="M10 20 20 28 27 36 12 30Z" fill="#e4e4e4"/><path d="M10 26Q10 34 22 36L28 30Q18 28 12 20Z" fill="#ddd"/><path d="M14 14 25 2 36 14 28 26Z" fill="#4a8a14"/><path d="M20 12 26 8 30 14 26 20Z" fill="#90c850"/></svg></button>
      <button class="tb short"><svg viewBox="0 0 40 40"><path d="M20 4A15 17 0 0 0 20 38Z" fill="#dd7a1c"/><path d="M20 4A15 17 0 0 1 20 38Z" fill="#f0f0f0"/></svg></button>
      <b class="tsep two"></b>
      <button class="tb last"><svg viewBox="0 0 40 40"><ellipse cx="20" cy="21" rx="12" ry="15" fill="#7cc0f0" stroke="#2a5ad0" stroke-width="2"/></svg></button>
    </div>
    <div class="canvas">
      <svg class="wires" viewBox="1088 299 1472 1238">
        <g fill="none">
          <g stroke="#4a4a46" stroke-width="12" stroke-dasharray="33 17" stroke-linecap="round">
            <path d="M1090 326C1500 332 2000 338 2560 340"/>
            <path d="M1090 862C1450 740 1800 680 2560 653"/>
            <path d="M1090 1070C1500 1010 2000 975 2560 973"/>
          </g>
          <path d="M1090 1497C1500 1400 2000 1330 2560 1324" stroke="#55534e" stroke-width="14"/>
          <g stroke="#33332f" stroke-opacity=".78" stroke-width="8">
            <path d="M2065 899C2260 890 2310 800 2325 700 2340 600 2325 430 2354 290"/>
            <path d="M2065 899C2200 880 2290 780 2340 690 2400 570 2440 510 2560 490"/>
            <path d="M2065 899C2220 890 2340 830 2560 800"/>
            <path d="M2065 899C2240 900 2330 990 2400 1050 2460 1090 2510 1110 2560 1115"/>
            <path d="M2065 899C2300 900 2390 980 2380 1180 2375 1300 2340 1420 2315 1540"/>
            <path d="M2065 899C2250 900 2320 980 2340 1130 2355 1260 2390 1440 2453 1493 2480 1512 2520 1522 2560 1527"/>
          </g>
        </g>
        <g>
          <path d="M2439 1444 2452 1441 2459 1452 2450 1456Z" fill="#000"/>
          <path d="M2500 1427 2515 1430 2527 1445 2542 1470 2530 1500 2510 1508 2470 1498 2458 1470 2475 1432Z" fill="#000" stroke="#000" stroke-width="4" stroke-linejoin="round"/>
          <circle cx="2498" cy="1468" r="38" fill="url(#giz)" stroke="#fff" stroke-width="3"/>
          <path d="M2506 1430 2520 1436 2508 1443ZM2462 1452 2473 1458 2461 1460ZM2522 1478 2535 1482 2526 1492ZM2483 1494 2490 1506 2476 1502Z" fill="#fff"/>
        </g>
      </svg>
      <div class="leftstub"></div>
      <div class="valuelist">
        <span>Parlante Irregular 1</span>
        <svg viewBox="0 0 40 40"><path d="M1 2H39L20 38Z" fill="#111" stroke="#111"/><path d="M8 6H32L20 30Z" fill="#666"/><path d="M13 10H27L20 24Z" fill="#111"/></svg>
        <i class="nib"></i>
      </div>
    </div>
    <footer class="gh-status">
      <svg class="info" viewBox="0 0 31 29"><ellipse cx="15.500" cy="14.500" rx="15" ry="14" fill="url(#inf)"/><path d="M12.500 5H18.500L17 17H14Z" fill="#dff0ff" stroke="#12308c"/><circle cx="15.500" cy="22" r="3" fill="#dff0ff" stroke="#12308c"/></svg>
      <span class="msg">Solution completed in ~145.1 seconds (170 seconds ago)</span>
      <span class="ver">1.0.0007</span>
    </footer>
  </section>
</div>
</body>
</html>
```
FILE: styles.css
```css
* { box-sizing: border-box; }
html, body { margin: 0; padding: 0; width: 2560px; height: 1600px; overflow: hidden; background: #000; font-family: "Inter", "Liberation Sans", sans-serif; }
.defs { position: absolute; width: 0; height: 0; }
.app { display: grid; grid-template-columns: 1064px 24px 1472px; height: 1600px; }

/* Rhino */
.rhino { display: flex; flex-direction: column; height: 1600px; background: #2a2a2a; }
.topbar { height: 78px; flex: none; display: flex; align-items: center; padding-left: 27px; background: #2a2a2a; border-bottom: 2px solid #111; }
.panel-icon { width: 41px; height: 40px; flex: none; }
.toggles { display: flex; align-items: center; margin: 5px 0 0 131px; gap: 64px; font-size: 24.700px; font-weight: 600; color: #6e6e6e; }
.pill { background: #4a4a4a; color: #5c5c5c; border-radius: 7px; height: 31px; line-height: 31px; padding: 0 22px; margin-left: -25px; }
.more { width: 22px; height: 24px; margin: 2px 0 0 53px; flex: none; }
.rhino-mid { flex: 1; display: flex; min-height: 0; }
.side { width: 262px; flex: none; background: #2d2d2d; border-right: 2px solid #6d6d6d; display: flex; flex-direction: column; }
.side-head { height: 50px; background: #2a2a2a; border-bottom: 3px solid #3d3d3d; flex: none; }
.cmd { margin: 23px 0 0 16px; width: 227px; height: 42px; line-height: 44px; flex: none; padding-left: 8px; background: #353535; border-top: 1px solid #444; font-size: 25px; color: #666; }
.tools { margin-top: 17px; display: grid; grid-template-columns: repeat(4, 60px); grid-auto-rows: 60px; flex: none; }
.tools svg { width: 60px; height: 60px; display: block; }
.tl { fill: none; stroke: #aaa; stroke-width: 2; }
.tl use { stroke: none; }
.mag { transform: translateY(5px); }
.grid3 rect { fill: #8ea8f4; stroke: #bbb; stroke-width: 3; }
.grid3 .w { fill: #eee; }
.opts { margin-top: -4px; border-top: 3px solid #6d6d6d; padding-top: 9px; display: flex; flex-direction: column; font-size: 22px; color: #e4e4e4; }
.opt { display: flex; align-items: center; height: 36px; padding-left: 41px; gap: 11px; flex: none; }
.opt i { width: 22px; height: 24px; border-radius: 5px; background: linear-gradient(#636363, #474747); flex: none; position: relative; }
.radio i { height: 23px; width: 23px; border-radius: 50%; }
.radio.on i::after { content: ""; position: absolute; left: 8px; top: 8px; width: 7px; height: 7px; border-radius: 50%; background: #ddd; }
.gapb { margin-bottom: 11px; }
.chk.on i { background: linear-gradient(#9a9a9a, #7d7d7d); }
.chk.on i::after { content: ""; position: absolute; left: 7px; top: 3px; width: 8px; height: 14px; border: solid #fff; border-width: 0 3px 3px 0; transform: rotate(40deg); }
.off { color: #696969; }
.off i { background: linear-gradient(#464646, #3c3c3c); }

.vp-col { flex: 1; display: flex; flex-direction: column; min-width: 0; }
.vp-tabs { height: 50px; flex: none; display: flex; align-items: center; padding-left: 21px; background: #333; position: relative; font-size: 25.500px; color: #5a5a5a; }
.vp-ico { width: 29px; height: 36px; flex: none; }
.vp-ico.second { margin-left: 35px; margin-right: 29px; }
.vsep { width: 1px; height: 28px; background: #777; flex: none; }
.vt { margin: 0 39px; }
.vt.cur { color: #242424; }
.layouts { position: absolute; left: 668px; top: 13px; font-size: 24px; color: #cfcfcf; }
.viewport { flex: 1; background: #9ca3ab; position: relative; border-bottom: 3px solid #000; }
.vp-label { position: absolute; left: 2px; top: 4px; width: 160px; height: 40px; line-height: 43px; padding-left: 9px; background: #8f8f8f; color: #fff; font-size: 24px; font-weight: 700; }
.model { position: absolute; left: 178px; top: 352px; width: 440px; height: 520px; }
.fc path { stroke: #3aa8e0; stroke-width: 1.500; stroke-linejoin: round; }
.axes { position: absolute; left: 60px; top: 1290px; width: 100px; height: 80px; overflow: visible; }
.ax { position: absolute; font-size: 25px; color: #5a5f66; }
.ax-z { left: 78px; top: 1274px; }
.ax-y { left: 96px; top: 1280px; }
.ax-x { left: 134px; top: 1333px; }
.r-status { height: 54px; flex: none; background: #333; display: flex; align-items: center; font-size: 22px; color: #e4e4e4; position: relative; }
.burger { width: 28px; height: 26px; margin-left: 9px; flex: none; }
.s-s { margin-left: 4px; }
.s-unit { margin-left: 51px; }
.s-plane { margin-left: 35px; width: 140px; height: 36px; border: 2px solid #4c4c4c; border-radius: 9px; color: #666; display: flex; align-items: center; justify-content: space-between; padding: 0 12px 0 12px; }
.s-plane svg { width: 14px; height: 22px; }
.s-x { margin-left: 33px; }
.s-y { margin-left: 68px; }
.s-z { margin-left: 80px; }

.split { background: #000; position: relative; }
.split i { position: absolute; left: 8px; top: 735px; width: 11px; height: 127px; border-radius: 5px; background: #6a6a6a; }

/* Grasshopper */
.gh { display: flex; flex-direction: column; height: 1600px; background: #2d2d2d; }
.gh-tabs { height: 45px; flex: none; background: #666; display: flex; align-items: center; padding: 3px 0 0 2px; font-size: 22px; color: #cfcfcf; border-bottom: 1px solid #565656; }
.gt { margin-right: 24px; white-space: nowrap; }
.gt.cur { background: #808080; height: 45px; margin-top: -3px; line-height: 40px; padding: 0 12px 0 12px; border-radius: 0 12px 0 0; color: #fff; margin-right: 12px; }
.ribbon { height: 151px; flex: none; background: #808080; border-radius: 0 14px 14px 0; margin-right: 5px; display: flex; gap: 9px; padding: 7px 0 0 8px; }
.grp { height: 142px; border: 2px solid #afafaf; border-radius: 9px; box-shadow: inset 0 0 0 1px #555; display: flex; flex-direction: column; overflow: hidden; padding: 0; }
.grp:last-child .cells { padding-right: 5px; }
.cells { height: 113px; display: flex; padding: 1px 1px 0 1px; flex: none; }
.col { width: 56px; display: flex; flex-direction: column; flex: none; }
.col svg { width: 56px; height: 56px; display: block; }
.csep { width: 2px; height: 100px; margin: 4px 9px 0; background: linear-gradient(transparent, #b4b4b4 30%, #b4b4b4 70%, transparent); flex: none; }
.gfoot { flex: 1; background: #676767; display: flex; align-items: center; justify-content: center; position: relative; font-size: 20px; color: #3a3a3a; padding-right: 22px; border-bottom: 1px solid #555; }
.gfoot em { position: absolute; right: 1px; top: 7px; font-style: normal; font-size: 15px; color: #b4b4b4; }
.gw { fill: none; stroke: #fff; }
.gsym { fill: #fff; text-anchor: middle; font-family: "Liberation Serif", serif; font-weight: 700; }
.big { font-size: 36px; }
.big2 { font-size: 32px; }
.mid { font-size: 26px; letter-spacing: -2px; }
.band { height: 23px; flex: none; background: #2c2c2c; border-bottom: 2px solid #666; }
.gh-tools { height: 80px; flex: none; background: #2d2d2d; display: flex; align-items: center; padding: 0 26px 0 9px; }
.tb { width: 64px; height: 38px; flex: none; padding: 0; border: 0; border-radius: 5px; background: #565656; display: flex; align-items: center; justify-content: center; margin-right: 14px; }
.tb svg { width: 36px; height: 36px; }
.tb.blue { background: #1a63d8; margin-right: 20px; }
.tb.near { margin-right: 12px; }
.tb.short { margin-right: 10px; }
.tb.wide1 { margin-right: 34px; }
.tb.wide2 { margin-right: 32px; }
.tb.last { margin-right: 0; }
.zoomsel { margin: 0 17px 0 11px; width: 107px; height: 38px; display: flex; background: #333; border-left: 1px solid #444; border-bottom: 1px solid #555; flex: none; color: #eee; font-size: 22px; line-height: 38px; }
.zoomsel span { flex: 1; padding-left: 7px; }
.zoomsel i { width: 34px; background: #1a63d8; border-radius: 0 5px 5px 0; display: flex; align-items: center; justify-content: center; }
.zoomsel svg { width: 16px; height: 10px; }
.grow { flex: 1; }
.tsep { width: 2px; height: 38px; background: #444; margin-right: 19px; flex: none; }
.tsep.two { margin-right: 9px; }
.canvas { height: 1238px; flex: none; position: relative; overflow: hidden; background-color: #d4d0c8; background-image: linear-gradient(#b8b4ac 3px, transparent 3px), linear-gradient(90deg, #b8b4ac 3px, transparent 3px); background-size: 440px 147px; background-position: 0 77px, 46px 0; border-bottom: 3px solid #777; border-right: 2px solid #777; }
.wires { position: absolute; left: 0; top: 0; width: 1472px; height: 1238px; }
.leftstub { position: absolute; left: 1px; top: 1182px; width: 15px; height: 54px; background: linear-gradient(#ddd, #aaa 30%, #888); border-top: 2px solid #222; border-bottom: 2px solid #222; }
.valuelist { position: absolute; left: 597px; top: 568px; width: 375px; height: 66px; border: 3px solid #3e3e3e; border-radius: 9px; background: linear-gradient(#f8f8f8, #e0e0e0 40%, #d0d0d0 45%, #c8c8c8); box-shadow: 0 0 0 3px #e8e4dc; display: flex; align-items: center; padding: 2px 0 0 18px; font-family: "DejaVu Sans", sans-serif; font-size: 28px; color: #111; }
.valuelist svg { position: absolute; right: 12px; top: 11px; width: 40px; height: 40px; }
.nib { position: absolute; right: -14px; top: 17px; width: 13px; height: 26px; border: 5px solid #000; border-left: 0; border-radius: 0 13px 13px 0; background: #fff; }
.gh-status { flex: 1; background: #2d2d2d; display: flex; align-items: center; font-size: 24px; color: #e2e2e2; padding: 0 0 2px 8px; position: relative; }
.info { width: 31px; height: 29px; flex: none; }
.msg { margin-left: 5px; }
.ver { position: absolute; left: 1257px; }
```
